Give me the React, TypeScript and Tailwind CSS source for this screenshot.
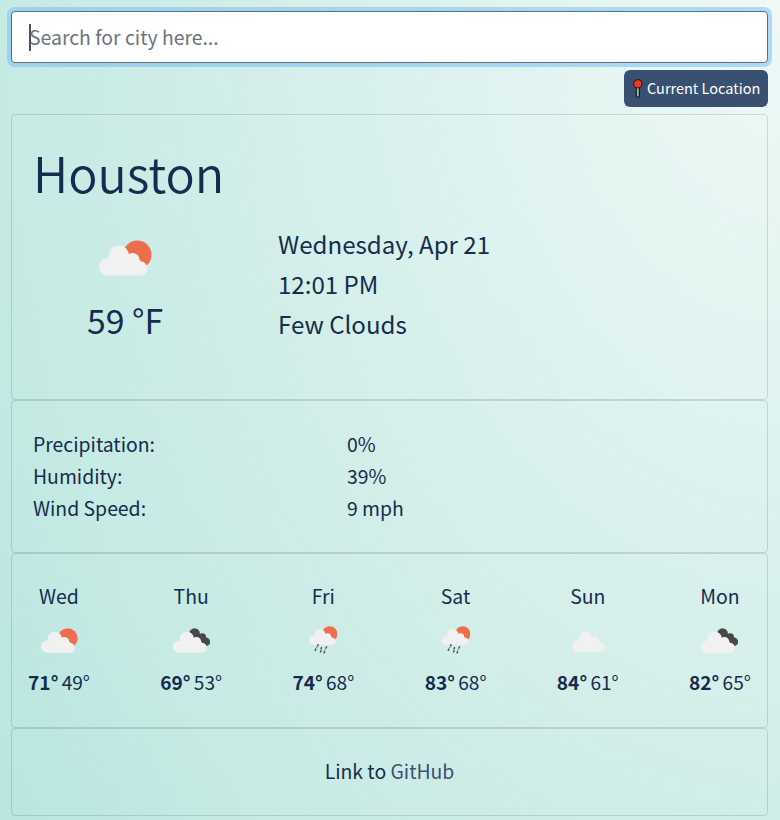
import React from 'react';

type Kind = 'few' | 'broken' | 'rain' | 'cloud';

// Cloud silhouette shared by every condition.
function Cloud() {
  return (
    <g fill="#f1f1f1">
      <circle cx="9" cy="27" r="9" />
      <circle cx="20.3" cy="15.5" r="10.3" />
      <circle cx="34.3" cy="20" r="7" />
      <circle cx="42" cy="28.7" r="7.3" />
      <rect x="9" y="20" width="33" height="16" />
    </g>
  );
}

function WeatherIcon({ kind, width, height }: { kind: Kind; width: number; height: number }) {
  if (kind === 'rain') {
    return (
      <svg width={width} height={height} viewBox="0 0 28 28">
        <circle cx="20.7" cy="7.9" r="7.7" fill="#ec6e4c" />
        <g transform="translate(0 .5) scale(.535 .51)">
          <Cloud />
        </g>
        <g stroke="#555" strokeWidth="1.6" strokeLinecap="round">
          <path d="M9 18.8l-.3 1M6.8 23l-.4 1.2M12.4 21.8l-.3 1M12 24.8l-.4 1M17.5 21l-.5 1M15.5 25.8l-.4 1" />
          <path d="M8 21.2l-.2.4M16 23.6l-.2.4" strokeWidth="1" />
        </g>
      </svg>
    );
  }
  return (
    <svg width={width} height={height} viewBox="0 0 54 36">
      {kind === 'few' && <circle cx="39" cy="14.7" r="14.5" fill="#ec6e4c" />}
      {kind === 'broken' && (
        <g fill="#484848">
          <circle cx="31.5" cy="8" r="7.8" />
          <circle cx="42.5" cy="13.2" r="5.8" />
          <circle cx="48" cy="20" r="6.2" />
          <path d="M35 6 L43 11 L48 18 L45 26 L30 17z" />
        </g>
      )}
      <Cloud />
    </svg>
  );
}

const forecast: { day: string; kind: Kind; high: number; low: number }[] = [
  { day: 'Wed', kind: 'few', high: 71, low: 49 },
  { day: 'Thu', kind: 'broken', high: 69, low: 53 },
  { day: 'Fri', kind: 'rain', high: 74, low: 68 },
  { day: 'Sat', kind: 'rain', high: 83, low: 68 },
  { day: 'Sun', kind: 'cloud', high: 84, low: 61 },
  { day: 'Mon', kind: 'broken', high: 82, low: 65 },
];

const card = 'rounded-[4px] border border-black/[.125]';

export default function App() {
  return (
    <div className="h-[820px] w-[780px] overflow-hidden bg-[radial-gradient(944px_1350px_at_100%_0%,#eff9f7_0%,#daf1ed_41%,#d3eee9_56%,#c6eae4_82%,#bae6e1_100%)] px-[11px] pr-[12px] pt-[11px] font-['Noto_Sans_CJK_JP','Noto_Sans_CJK_SC',sans-serif] text-[#152c4e]">
      <div className="flex h-[52px] items-center rounded-[4px] border border-[#5f707d] bg-white pl-[17px] shadow-[0_0_0_4px_rgba(110,185,250,.5)]">
        <span className="-mr-[2px] h-[27px] w-[2px] bg-[#495057]" />
        <span className="text-[19.4px] leading-[32px] text-[#6c757d]">Search for city here...</span>
      </div>

      <div className="mt-[7px] flex justify-end">
        <button className="flex h-[37px] w-[144px] items-center rounded-[6px] bg-[#3a5070] pl-[9px] text-white">
          <svg width="10" height="19" viewBox="0 0 10 19" className="mr-[4px]">
            <rect x="3.2" y="7.5" width="3.2" height="10.5" rx="1" fill="#aaa" stroke="#111" strokeWidth="1.1" />
            <circle cx="4.8" cy="4.8" r="4.1" fill="#f03a17" stroke="#1c1210" strokeWidth="1" />
          </svg>
          <span className="whitespace-nowrap pb-px text-[14.5px] leading-[24px]">Current Location</span>
        </button>
      </div>

      <section className={`${card} mt-[7px] h-[286px] px-[22px] pt-[21px]`}>
        <h1 className="-ml-px h-[75px] text-[48.7px] font-[350] leading-[72px]">Houston</h1>
        <div className="mt-[13px] flex">
          <div className="flex w-[182px] flex-col items-center pt-[16px]">
            <WeatherIcon kind="few" width={53} height={36} />
            <p className="mt-[20px] text-[33.7px] leading-[48px]">59 °F</p>
          </div>
          <div className="ml-[62px] text-[24.1px] leading-[40px]">
            <p>Wednesday, Apr 21</p>
            <p>12:01 PM</p>
            <p>Few Clouds</p>
          </div>
        </div>
      </section>

      <section className={`${card} grid h-[153px] grid-cols-[314px_1fr] content-start px-[21px] pt-[27px] text-[19.4px] leading-[32px]`}>
        <span>Precipitation:</span>
        <span>0%</span>
        <span>Humidity:</span>
        <span>39%</span>
        <span>Wind Speed:</span>
        <span>9 mph</span>
      </section>

      <section className={`${card} flex h-[175px] justify-between px-[13px] pt-[26px] text-[19.4px]`}>
        {forecast.map((f) => (
          <div key={f.day} className="flex w-[68px] flex-col items-center">
            <p className="leading-[32px]">{f.day}</p>
            <div className="-mb-px flex h-[56px] w-full items-center justify-center">
              {f.kind === 'rain' ? (
                <WeatherIcon kind="rain" width={28} height={28} />
              ) : f.kind === 'cloud' ? (
                <div className="pb-px pl-[5px]">
                  <WeatherIcon kind="cloud" width={36} height={24} />
                </div>
              ) : (
                <WeatherIcon kind={f.kind} width={37} height={25} />
              )}
            </div>
            <p className="whitespace-nowrap text-[19.1px] leading-[30px]">
              <b>{f.high}°</b>
              <span className="-ml-px"> {f.low}°</span>
            </p>
          </div>
        ))}
      </section>

      <footer className={`${card} h-[88px] pt-[26px] text-center text-[19.4px] leading-[32px]`}>
        Link to <a className="text-[#3a5070]">GitHub</a>
      </footer>
    </div>
  );
}
